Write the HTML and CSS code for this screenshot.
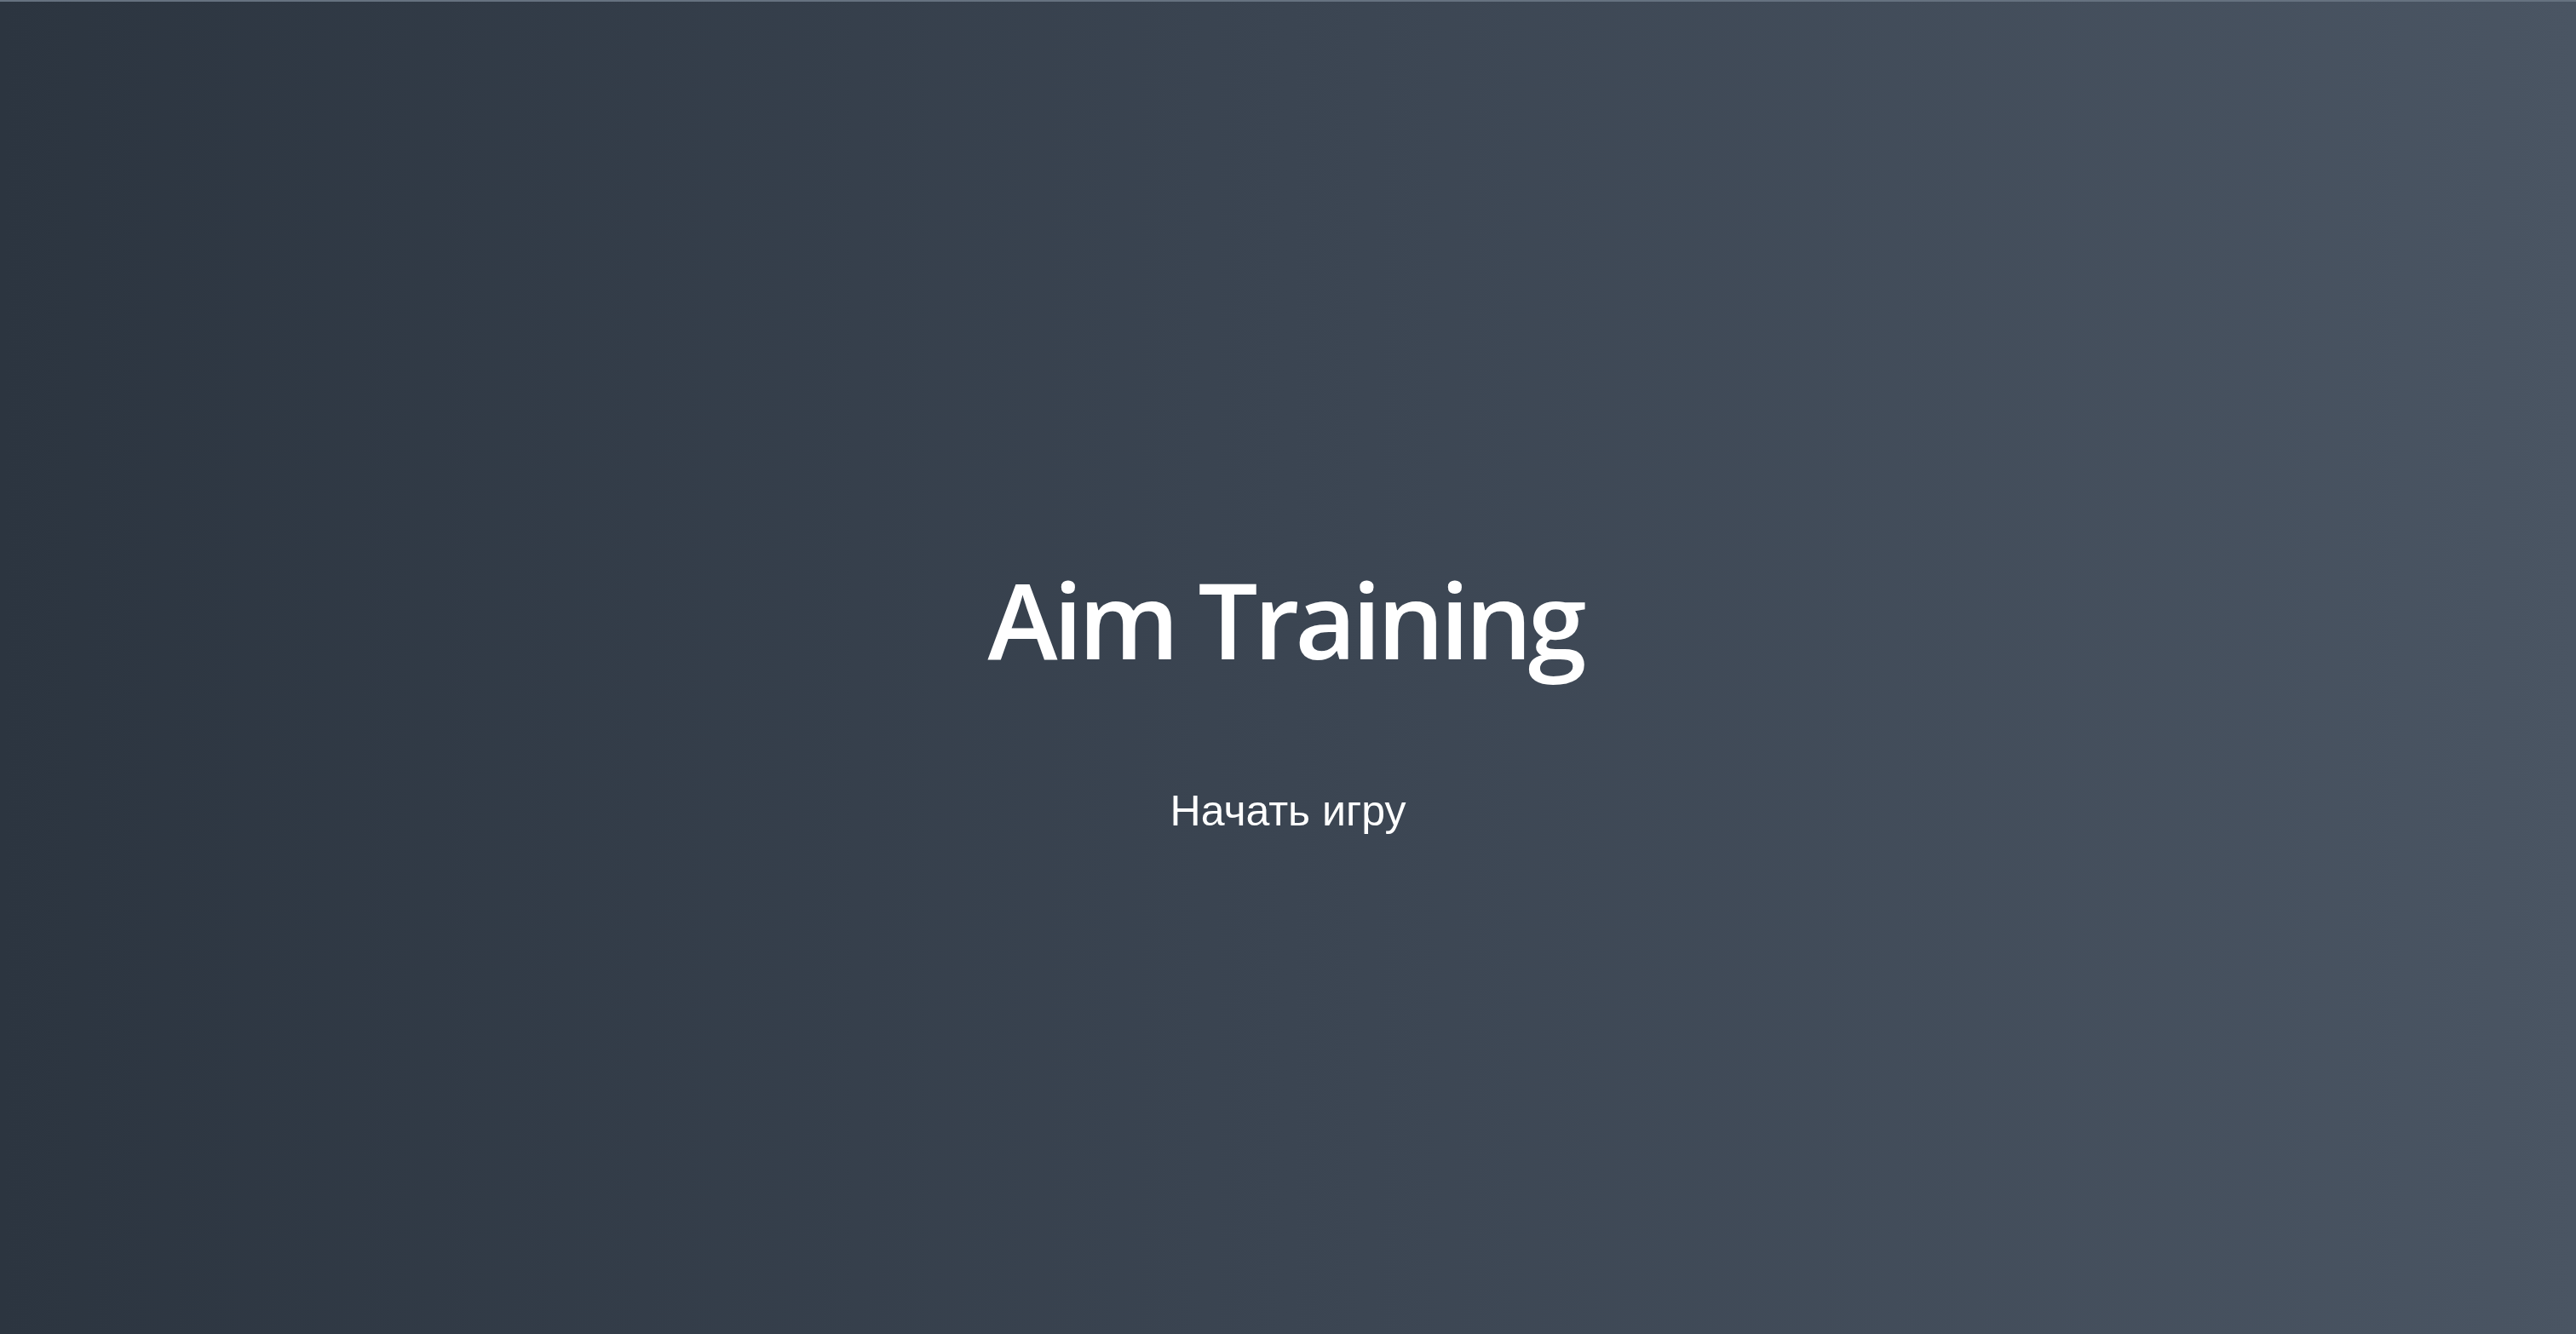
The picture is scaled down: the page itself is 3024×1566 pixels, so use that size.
FILE: index.html
```html
<!DOCTYPE html>
<html lang="ru">
<head>
<meta charset="utf-8">
<title>Aim Training</title>
<link rel="stylesheet" href="styles.css">
</head>
<body>
<main class="screen">
  <h1 class="title">Aim Training</h1>
  <button class="start">Начать игру</button>
</main>
</body>
</html>
```

FILE: styles.css
```css
html, body {
  margin: 0;
  padding: 0;
  height: 100%;
}
body {
  background: #2c3540;
}
.screen {
  box-sizing: border-box;
  height: 100vh;
  display: flex;
  flex-direction: column;
  align-items: center;
  justify-content: center;
  gap: 139px;
  padding-top: 72px;
  border-top: 2px solid #667280;
  background: linear-gradient(to right, #2c3540 0%, #3b4552 50%, #4a5563 100%);
}
.title {
  margin: 0;
  padding-right: 7px;
  font-family: "Open Sans", "Noto Sans", sans-serif;
  font-weight: 600;
  font-size: 124px;
  letter-spacing: -5px;
  line-height: 1;
  color: #ffffff;
}
.start {
  margin: 0;
  padding: 0;
  border: 0;
  background: none;
  font-family: "Liberation Sans", Arial, sans-serif;
  font-size: 50px;
  line-height: 1;
  color: #ffffff;
  cursor: pointer;
}
```
